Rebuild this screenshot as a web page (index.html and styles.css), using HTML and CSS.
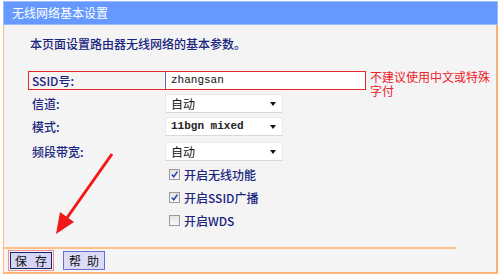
FILE: index.html
```html
<!DOCTYPE html>
<html lang="zh">
<head>
<meta charset="utf-8">
<link rel="stylesheet" href="styles.css">
</head>
<body>
<div class="page">
  <div class="header">无线网络基本设置</div>
  <div class="panel">
    <div class="content">
      <p class="intro">本页面设置路由器无线网络的基本参数。</p>
      <div class="row row-ssid">
        <div class="ssid-box">
          <span class="label">SSID号:</span>
          <span class="input">zhangsan</span>
        </div>
        <span class="hint">不建议使用中文或特殊字付</span>
      </div>
      <div class="row">
        <span class="label">信道:</span>
        <span class="select cjk">自动<i class="caret"></i></span>
      </div>
      <div class="row">
        <span class="label">模式:</span>
        <span class="select mono">11bgn mixed<i class="caret"></i></span>
      </div>
      <div class="row row-tall">
        <span class="label">频段带宽:</span>
        <span class="select cjk">自动<i class="caret"></i></span>
      </div>
      <div class="row check-row">
        <span class="check on"><svg viewBox="0 0 10 10"><path d="M2 5 L4.2 7.5 L8.2 1.8" /></svg></span>
        <span class="check-label">开启无线功能</span>
      </div>
      <div class="row check-row">
        <span class="check on"><svg viewBox="0 0 10 10"><path d="M2 5 L4.2 7.5 L8.2 1.8" /></svg></span>
        <span class="check-label">开启SSID广播</span>
      </div>
      <div class="row check-row">
        <span class="check"></span>
        <span class="check-label">开启WDS</span>
      </div>
      <svg class="arrow" width="80" height="90" viewBox="0 0 80 90">
        <line x1="62" y1="2" x2="14" y2="70" />
        <polygon points="6,82 10,60 24,70" />
      </svg>
    </div>
    <div class="footer-line"></div>
    <div class="buttons">
      <span class="btn btn-save"><span class="btn-inner"><span>保</span><span>存</span></span></span>
      <span class="btn btn-help"><span>帮</span><span>助</span></span>
    </div>
  </div>
</div>
</body>
</html>
```
FILE: styles.css
```css
* { box-sizing: border-box; }
html, body { margin: 0; padding: 0; background: #ffffff; }
body {
  font-family: "Noto Sans CJK SC", "DejaVu Sans", sans-serif;
  font-size: 12px;
  padding-top: 1px;
}
.page {
  margin-left: 3px;
  width: 495px;
}
.header {
  height: 24px;
  line-height: 22px;
  background: #6699ff;
  border: 1px solid #9dbbff;
  color: #ffffff;
  padding-left: 8px;
  font-size: 12px;
}
.panel {
  background: #f4f4f4;
  border-left: 1px solid #ffb878;
  border-right: 2px solid #ffb070;
  border-bottom: 2px solid #ffb878;
  height: 249px;
  display: flex;
  flex-direction: column;
}
.content {
  position: relative;
  padding-left: 24px;
  height: 222px;
}
.intro {
  margin: 11px 0 0 2px;
  height: 16px;
  line-height: 16px;
  color: #1a2680;
  font-weight: 500;
  padding-bottom: 17px;
  box-sizing: content-box;
}
.row {
  display: flex;
  align-items: center;
  height: 23px;
  padding-left: 4px;
}
.row-ssid {
  padding-left: 0;
  align-items: flex-start;
  padding-top: 2px;
}
.row-tall { height: 25px; padding-top: 1px; }
.label {
  width: 133px;
  color: #1a2680;
  font-weight: 500;
  flex: none;
}
.ssid-box {
  display: flex;
  align-items: center;
  width: 338px;
  height: 19px;
  border: 1px solid #e8262c;
  padding-left: 3px;
  flex: none;
}
.ssid-box .label { width: 133px; }
.input {
  flex: 1;
  height: 17px;
  background: #ffffff;
  border-left: 1px solid #5a63c8;
  font-family: "Liberation Mono", "DejaVu Sans Mono", monospace;
  font-size: 11px;
  line-height: 17px;
  padding-left: 5px;
  color: #111111;
}
.hint {
  width: 122px;
  margin-left: 4px;
  color: #f0202a;
  line-height: 14px;
  margin-top: -1px;
}
.select {
  position: relative;
  width: 118px;
  height: 19px;
  background: #ffffff;
  border: 1px solid #e8e8e8;
  border-bottom-color: #d8d8d8;
  line-height: 17px;
  padding-left: 5px;
  color: #111111;
}
.select.mono {
  font-family: "Liberation Mono", "DejaVu Sans Mono", monospace;
  font-size: 11px;
  font-weight: bold;
  color: #222222;
}
.caret {
  position: absolute;
  right: 6px;
  top: 7px;
  width: 0;
  height: 0;
  border-left: 3px solid transparent;
  border-right: 3px solid transparent;
  border-top: 4px solid #111111;
}
.check-row { padding-left: 141px; }
.check {
  width: 11px;
  height: 11px;
  border: 1px solid #9a9a9a;
  background: linear-gradient(#e4e4e4, #f8f8f8);
  margin-right: 4px;
  display: inline-flex;
  flex: none;
}
.check svg { width: 9px; height: 9px; }
.check path {
  fill: none;
  stroke: #2c3e9c;
  stroke-width: 1.6;
}
.check-label { color: #1a2680; font-weight: 500; }
.arrow {
  position: absolute;
  left: 46px;
  top: 127px;
}
.arrow line { stroke: #f01818; stroke-width: 3; }
.arrow polygon { fill: #f01818; }
.footer-line {
  width: 452px;
  height: 2px;
  background: #ffc088;
}
.buttons {
  display: flex;
  align-items: center;
  gap: 9px;
  padding-left: 4px;
  padding-top: 1px;
}
.btn {
  height: 21px;
  display: inline-flex;
  align-items: center;
  justify-content: center;
  gap: 8px;
  color: #111111;
  font-size: 12px;
}
.btn-save {
  width: 46px;
  border: 1px solid #f09090;
  padding: 1px;
}
.btn-inner {
  width: 100%;
  height: 100%;
  border: 1px solid #1a2468;
  background: #d4d4f4;
  display: flex;
  align-items: center;
  justify-content: center;
  gap: 8px;
  line-height: 15px;
}
.btn-help {
  width: 42px;
  height: 19px;
  border: 1px solid #6a6ad4;
  background: #dcdcf6;
  gap: 6px;
}
```
